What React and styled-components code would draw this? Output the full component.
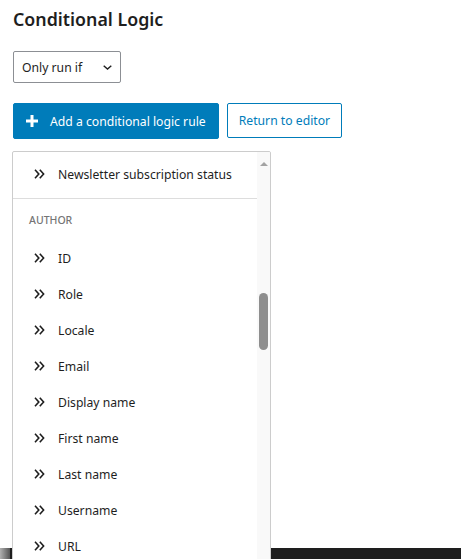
import React from "react";
import styled, { createGlobalStyle } from "styled-components";

const GlobalStyle = createGlobalStyle`
  html, body {
    margin: 0;
    padding: 0;
    height: 100%;
    overflow: hidden;
    background: #fff;
  }
  #root {
    height: 100%;
  }
  * {
    box-sizing: border-box;
  }
`;

const authorFields = [
  "ID",
  "Role",
  "Locale",
  "Email",
  "Display name",
  "First name",
  "Last name",
  "Username",
  "URL",
];

const ChevronsIcon = () => (
  <svg width="11" height="10" viewBox="0 0 11 10" fill="none">
    <path
      d="M1 0.8 L4.8 5 L1 9.2 M5.8 0.8 L9.6 5 L5.8 9.2"
      stroke="#1e1e1e"
      strokeWidth="1.6"
    />
  </svg>
);

const PlusIcon = () => (
  <svg width="12" height="12" viewBox="0 0 12 12">
    <path d="M4.5 0h3v4.5H12v3H7.5V12h-3V7.5H0v-3h4.5z" fill="#fff" />
  </svg>
);

const SelectChevron = () => (
  <svg width="9" height="5" viewBox="0 0 9 5" fill="none">
    <path d="M0.7 0.7 L4.5 4 L8.3 0.7" stroke="#1e1e1e" strokeWidth="1.4" />
  </svg>
);

export default function App() {
  return (
    <>
      <GlobalStyle />
      <Page>
        <Main>
          <Title>Conditional Logic</Title>
          <Select>
            <span>Only run if</span>
            <SelectChevron />
          </Select>
          <ButtonRow>
            <Button $primary>
              <PlusIcon />
              Add a conditional logic rule
            </Button>
            <Button>Return to editor</Button>
          </ButtonRow>
          <MenuAnchor>
            <Menu>
              <MenuList>
                <Group $divider>
                  <Item>
                    <ChevronsIcon />
                    <span>Newsletter subscription status</span>
                  </Item>
                </Group>
                <Group>
                  <GroupLabel>Author</GroupLabel>
                  {authorFields.map((f) => (
                    <Item key={f}>
                      <ChevronsIcon />
                      <span>{f}</span>
                    </Item>
                  ))}
                </Group>
              </MenuList>
              <Scrollbar>
                <ScrollArrow />
                <ScrollThumb />
              </Scrollbar>
            </Menu>
          </MenuAnchor>
        </Main>
        <Footer>
          <FooterEdge />
        </Footer>
      </Page>
    </>
  );
}

const Page = styled.div`
  height: 100%;
  display: flex;
  flex-direction: column;
  font-family: "Noto Sans", "Open Sans", sans-serif;
  color: #1e1e1e;
`;

const Main = styled.div`
  flex: 1;
  display: flex;
  flex-direction: column;
  align-items: flex-start;
  padding: 6px 0 0 13px;
`;

const Title = styled.h2`
  margin: 0;
  font-size: 17.8px;
  font-weight: 600;
  line-height: 26px;
`;

const Select = styled.div`
  margin-top: 19px;
  width: 108px;
  height: 32px;
  border: 1px solid #8c8f94;
  border-radius: 2px;
  display: flex;
  align-items: center;
  justify-content: space-between;
  padding: 0 8px 0 8px;
  font-size: 12.2px;

  svg {
    margin-top: 1px;
  }
`;

const ButtonRow = styled.div`
  margin-top: 20px;
  display: flex;
  gap: 8px;
`;

const Button = styled.button`
  height: ${(p) => (p.$primary ? "36px" : "35px")};
  display: flex;
  align-items: center;
  gap: 12px;
  padding: 0 ${(p) => (p.$primary ? "12px" : "11px")} 0
    ${(p) => (p.$primary ? "12px" : "11px")};
  border-radius: 2px;
  font-family: inherit;
  font-size: 12.2px;
  border: 1px solid #007cba;
  background: ${(p) => (p.$primary ? "#007cba" : "#fff")};
  color: ${(p) => (p.$primary ? "#fff" : "#007cba")};
`;

const MenuAnchor = styled.div`
  position: relative;
  width: 100%;
  margin-top: 12px;
  margin-left: -1px;
`;

const Menu = styled.div`
  position: absolute;
  top: 0;
  left: 0;
  width: 259px;
  height: 460px;
  background: #fff;
  border: 1px solid #ccc;
  border-radius: 2px;
  display: flex;
  overflow: hidden;
  z-index: 2;
`;

const MenuList = styled.div`
  width: 244px;
  padding-top: 4px;
`;

const Group = styled.div`
  padding-bottom: ${(p) => (p.$divider ? "6px" : "0")};
  border-bottom: ${(p) => (p.$divider ? "1px solid #ddd" : "none")};
`;

const GroupLabel = styled.div`
  height: 41px;
  display: flex;
  align-items: center;
  padding-left: 16px;
  font-size: 10.5px;
  font-weight: 500;
  text-transform: uppercase;
  color: #757575;
`;

const Item = styled.div`
  height: 36px;
  display: flex;
  align-items: center;
  gap: 13px;
  padding-left: 21px;
  font-size: 12.2px;
  white-space: nowrap;
`;

const Scrollbar = styled.div`
  position: relative;
  flex: 1;
  background: #f9f9f9;
`;

const ScrollArrow = styled.div`
  position: absolute;
  top: 10px;
  left: 3px;
  width: 0;
  height: 0;
  border-left: 4px solid transparent;
  border-right: 4px solid transparent;
  border-bottom: 4px solid #a3a3a3;
`;

const ScrollThumb = styled.div`
  position: absolute;
  top: 141px;
  left: 2px;
  width: 9px;
  height: 57px;
  border-radius: 5px;
  background: #8e8e8e;
`;

const Footer = styled.div`
  height: 11px;
  flex-shrink: 0;
  background: #1e1e1e;
`;

const FooterEdge = styled.div`
  width: 10px;
  height: 100%;
  background: linear-gradient(90deg, #b0b0b0, #555);
`;
